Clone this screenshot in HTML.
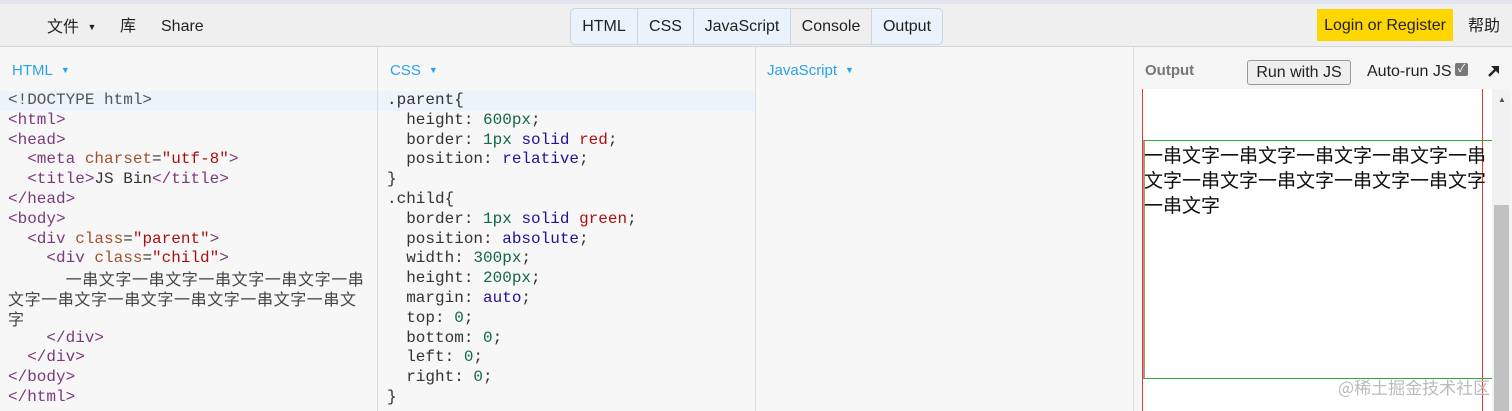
<!DOCTYPE html>
<html><head><meta charset="utf-8"><style>
*{margin:0;padding:0;box-sizing:border-box}
body{width:1512px;height:411px;overflow:hidden;background:#f7f7f7;font-family:"Liberation Sans","Noto Sans CJK SC",sans-serif;position:relative}
.top{position:absolute;left:0;top:0;width:1512px;height:47px;background:#efefef;border-top:4px solid #e3e6f0;border-bottom:1px solid #d6d6d6}
.t{position:absolute;height:20px;line-height:20px;font-size:16px;color:#222;top:13px}
.tabs{position:absolute;left:570px;top:4px;height:37px;border:1px solid #cfd6e0;border-radius:5px;background:#eaf2fc;display:flex}
.tabs div{text-align:center;line-height:36px;font-size:16px;color:#222;border-right:1px solid #cfd6e0}
.tabs div:last-child{border:none}
.login{position:absolute;left:1317px;top:5px;width:136px;height:32px;background:#ffd700;font-size:16px;line-height:34px;text-align:center;color:#222}
.pan{position:absolute;top:47px;height:364px;border-left:1px solid #ddd}
.ph{position:absolute;top:62px;font-size:15px;color:#2aa3e6}
.ph span{font-size:9px;margin-left:8px;vertical-align:2px}
.hl{position:absolute;top:91px;height:20px;background:#edf3fb}
pre{position:absolute;top:91px;font-family:"Liberation Mono","Noto Sans CJK SC",monospace;font-size:16px;line-height:19.8px;color:#333}
.g{color:#7a3a7a}.a{color:#a0522d}.s{color:#a11}.n{color:#164}.k{color:#219}
.cj{font-family:"Noto Sans CJK SC",sans-serif;font-size:16px;line-height:19.8px;letter-spacing:0.6px;color:#444;display:inline-block;vertical-align:top;height:19.8px}
</style></head><body>
<div class="top">
<div class="t" style="left:47px">文件 <span style="font-size:9px;margin-left:4px;vertical-align:2px">▼</span></div>
<div class="t" style="left:120px">库</div>
<div class="t" style="left:161px">Share</div>
<div class="tabs"><div style="width:67px">HTML</div><div style="width:56px">CSS</div><div style="width:97px">JavaScript</div><div style="width:81px;background:#efefef">Console</div><div style="width:70px">Output</div></div>
<div class="login">Login or Register</div>
<div class="t" style="left:1468px">帮助</div>
</div>
<div class="hl" style="left:0;width:755px"></div>
<div class="ph" style="left:12px">HTML<span>▼</span></div>
<div class="pan" style="left:377px;width:378px"></div>
<div class="ph" style="left:390px">CSS<span>▼</span></div>
<div class="pan" style="left:755px;width:378px"></div>
<div class="ph" style="left:767px">JavaScript<span>▼</span></div>
<div class="pan" style="left:1133px;width:379px;background:#f5f5f5"></div>
<pre style="left:8px"><span style="color:#555">&lt;!DOCTYPE html&gt;</span>
<span class="g">&lt;html&gt;</span>
<span class="g">&lt;head&gt;</span>
  <span class="g">&lt;meta</span> <span class="a">charset</span>=<span class="s">"utf-8"</span><span class="g">&gt;</span>
  <span class="g">&lt;title&gt;</span>JS Bin<span class="g">&lt;/title&gt;</span>
<span class="g">&lt;/head&gt;</span>
<span class="g">&lt;body&gt;</span>
  <span class="g">&lt;div</span> <span class="a">class</span>=<span class="s">"parent"</span><span class="g">&gt;</span>
    <span class="g">&lt;div</span> <span class="a">class</span>=<span class="s">"child"</span><span class="g">&gt;</span>
      <span class="cj">一串文字一串文字一串文字一串文字一串</span>
<span class="cj">文字一串文字一串文字一串文字一串文字一串文</span>
<span class="cj">字</span>
    <span class="g">&lt;/div&gt;</span>
  <span class="g">&lt;/div&gt;</span>
<span class="g">&lt;/body&gt;</span>
<span class="g">&lt;/html&gt;</span></pre>
<pre style="left:387px">.parent{
  height: <span class="n">600px</span>;
  border: <span class="n">1px</span> <span class="k">solid</span> <span class="s">red</span>;
  position: <span class="k">relative</span>;
}
.child{
  border: <span class="n">1px</span> <span class="k">solid</span> <span class="s">green</span>;
  position: <span class="k">absolute</span>;
  width: <span class="n">300px</span>;
  height: <span class="n">200px</span>;
  margin: <span class="k">auto</span>;
  top: <span class="n">0</span>;
  bottom: <span class="n">0</span>;
  left: <span class="n">0</span>;
  right: <span class="n">0</span>;
}</pre>
<div style="position:absolute;left:1145px;top:62px;font-size:15px;font-weight:bold;color:#777">Output</div>
<div style="position:absolute;left:1247px;top:60px;width:104px;height:25px;border:1px solid #999;border-radius:3px;background:#efefef;font-size:16px;text-align:center;line-height:23px;color:#222">Run with JS</div>
<div style="position:absolute;left:1367px;top:63px;font-size:16px;color:#222">Auto-run JS</div>
<div style="position:absolute;left:1455px;top:63px;width:13px;height:13px;background:#777;border-radius:2px;color:#fff;font-size:11px;line-height:13px;text-align:center">✓</div>
<svg style="position:absolute;left:1487px;top:64px" width="14" height="14" viewBox="0 0 14 14"><path d="M2 12 L11 3" stroke="#222" stroke-width="2.4"/><path d="M4 2 H12 V10 Z" fill="#222"/></svg>
<div style="position:absolute;left:1141px;top:89px;width:351px;height:322px;background:#fff"></div>
<div style="position:absolute;left:1492px;top:89px;width:18px;height:322px;background:#f1f1f1"></div>
<div style="position:absolute;left:1494px;top:205px;width:15px;height:206px;background:#c1c1c1"></div>
<div style="position:absolute;left:1498px;top:95px;font-size:8px;color:#555">▲</div>
<div style="position:absolute;left:1142px;top:89px;width:1px;height:322px;background:#e33"></div>
<div style="position:absolute;left:1482px;top:89px;width:1px;height:322px;background:#e33"></div>
<div style="position:absolute;left:1143px;top:140px;width:349px;height:239px;border-top:1px solid #3a3;border-bottom:1px solid #3a3;border-left:2px solid #a98"></div>
<div style="position:absolute;left:1144px;top:142px;width:345px;font-family:'Noto Sans CJK SC',sans-serif;font-size:19px;line-height:25px;color:#111;word-break:break-all">一串文字一串文字一串文字一串文字一串文字一串文字一串文字一串文字一串文字一串文字</div>
<div style="position:absolute;left:1338px;top:374px;font-family:'Noto Sans CJK SC',sans-serif;font-size:17px;color:#bbb">@稀土掘金技术社区</div>
</body></html>
